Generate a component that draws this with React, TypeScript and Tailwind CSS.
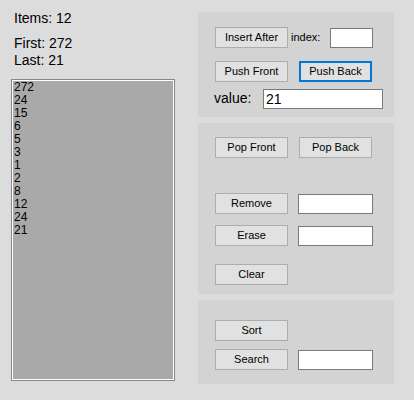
const items = [272, 24, 15, 6, 5, 3, 1, 2, 8, 12, 24, 21];

function Btn({ label, focused = false }: { label: string; focused?: boolean }) {
  return (
    <button
      className={
        'w-[73px] h-[21px] shrink-0 bg-[#e1e1e1] text-[11px] leading-[13px] text-black flex items-center justify-center ' +
        (focused ? 'border-2 border-[#0078d7]' : 'border border-[#adadad]')
      }
    >
      {label}
    </button>
  );
}

function Field({ value = '', className = '' }: { value?: string; className?: string }) {
  return (
    <div
      className={
        'h-[20px] bg-white border border-[#7a7a7a] pl-[2px] text-[14px] leading-[18px] text-black ' + className
      }
    >
      {value}
    </div>
  );
}

export default function App() {
  return (
    <div className="w-[414px] h-[400px] bg-[#dcdcdc] flex font-['Liberation_Sans',Arial,sans-serif] text-black overflow-hidden">
      {/* left column */}
      <div className="w-[175px] shrink-0 pt-[10px] flex flex-col">
        <div className="pl-[14px] text-[14px] leading-[17px]">Items: 12</div>
        <div className="pl-[14px] text-[14px] leading-[17px] mt-[8px]">First: 272</div>
        <div className="pl-[14px] text-[14px] leading-[17px]">Last: 21</div>
        <div className="ml-[11px] mt-[10px] w-[164px] h-[302px] border border-[#828790]">
          <div className="w-full h-full border border-white bg-[#a9a9a9] pl-[1px] text-[12px] leading-[13px]">
            {items.map((n, i) => (
              <div key={i}>{n}</div>
            ))}
          </div>
        </div>
      </div>

      {/* right column */}
      <div className="ml-[23px] pt-[12px] flex flex-col gap-[6px]">
        <div className="w-[196px] h-[105px] bg-[#d3d3d3] pt-[15px] pl-[17px] flex flex-col">
          <div className="flex items-center">
            <Btn label="Insert After" />
            <div className="w-[42px] pl-[3px] text-[11px]">index:</div>
            <Field className="w-[43px]" />
          </div>
          <div className="flex mt-[13px] gap-[11px]">
            <Btn label="Push Front" />
            <Btn label="Push Back" focused />
          </div>
          <div className="flex items-center mt-[6px] -ml-[1px]">
            <div className="w-[49px] text-[14px]">value:</div>
            <Field value="21" className="w-[120px]" />
          </div>
        </div>

        <div className="w-[196px] h-[171px] bg-[#d3d3d3] pt-[14px] pl-[17px] flex flex-col">
          <div className="flex gap-[11px]">
            <Btn label="Pop Front" />
            <Btn label="Pop Back" />
          </div>
          <div className="flex items-start mt-[35px] gap-[10px]">
            <Btn label="Remove" />
            <Field className="w-[75px] mt-[1px]" />
          </div>
          <div className="flex items-start mt-[11px] gap-[10px]">
            <Btn label="Erase" />
            <Field className="w-[75px] mt-[1px]" />
          </div>
          <div className="mt-[18px]">
            <Btn label="Clear" />
          </div>
        </div>

        <div className="w-[196px] h-[84px] bg-[#d3d3d3] pt-[20px] pl-[17px] flex flex-col">
          <Btn label="Sort" />
          <div className="flex items-start mt-[8px] gap-[10px]">
            <Btn label="Search" />
            <Field className="w-[75px] mt-[1px]" />
          </div>
        </div>
      </div>
    </div>
  );
}
